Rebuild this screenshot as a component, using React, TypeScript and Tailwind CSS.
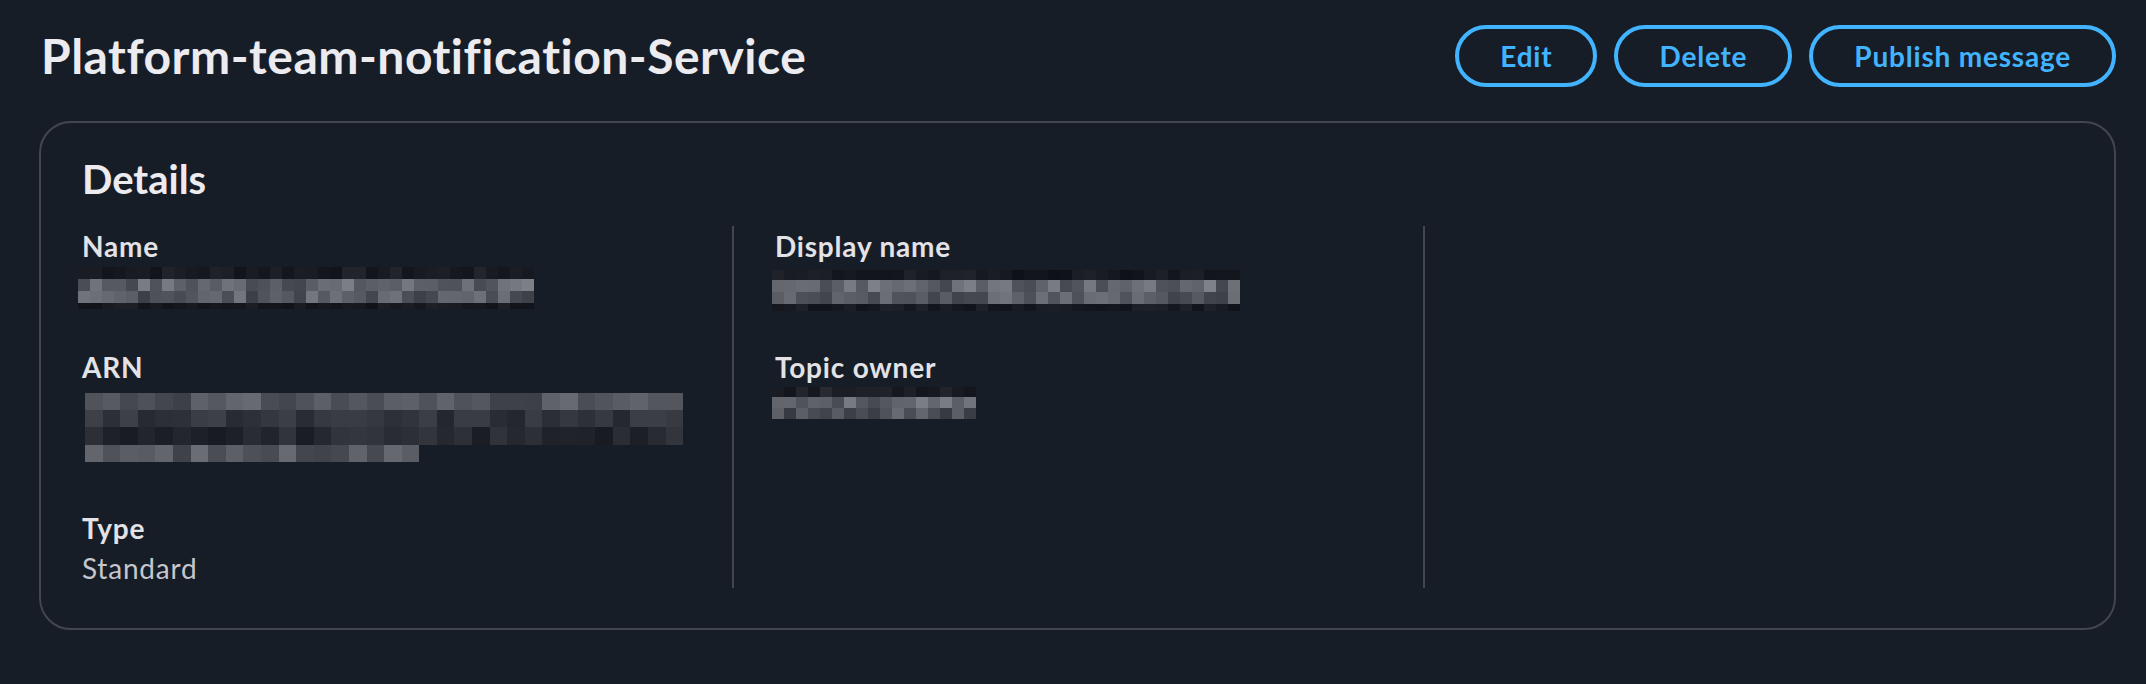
import type { ReactNode } from 'react';

// Redacted values are shown as a pixel mosaic, like the reference.
type MosaicRow = { cells: number; h: number; lo: number; hi: number };

function seeded(seed: number) {
  let s = seed;
  return () => {
    s = (s * 9301 + 49297) % 233280;
    return s / 233280;
  };
}

function Mosaic({ rows, cellW, seed }: { rows: MosaicRow[]; cellW: number; seed: number }) {
  const rand = seeded(seed);
  return (
    <div className="flex flex-col">
      {rows.map((row, r) => (
        <div key={r} className="flex">
          {Array.from({ length: row.cells }).map((_, c) => {
            const v = Math.round(row.lo + rand() * (row.hi - row.lo));
            return (
              <div
                key={c}
                style={{
                  width: cellW,
                  height: row.h,
                  backgroundColor: `rgb(${v}, ${v + 3}, ${v + 10})`,
                }}
              />
            );
          })}
        </div>
      ))}
    </div>
  );
}

const nameRows: MosaicRow[] = [
  { cells: 38, h: 12, lo: 16, hi: 34 },
  { cells: 38, h: 12, lo: 64, hi: 126 },
  { cells: 38, h: 12, lo: 60, hi: 116 },
  { cells: 38, h: 6, lo: 16, hi: 30 },
];

const displayRows: MosaicRow[] = [
  { cells: 39, h: 10, lo: 14, hi: 32 },
  { cells: 39, h: 12, lo: 64, hi: 126 },
  { cells: 39, h: 12, lo: 60, hi: 116 },
  { cells: 39, h: 7, lo: 16, hi: 30 },
];

const arnRows: MosaicRow[] = [
  { cells: 34, h: 17, lo: 60, hi: 104 },
  { cells: 34, h: 17, lo: 34, hi: 62 },
  { cells: 34, h: 18, lo: 24, hi: 52 },
  { cells: 19, h: 17, lo: 62, hi: 108 },
];

const ownerRows: MosaicRow[] = [
  { cells: 17, h: 10, lo: 18, hi: 40 },
  { cells: 17, h: 11, lo: 68, hi: 122 },
  { cells: 17, h: 11, lo: 54, hi: 104 },
];

function Field({ label, children }: { label: string; children: ReactNode }) {
  return (
    <div className="flex flex-col">
      <div className="text-[28px] leading-[40px] font-bold tracking-[0.8px] text-[#e2e2e7]">{label}</div>
      {children}
    </div>
  );
}

export default function App() {
  return (
    <div
      className="min-h-[684px] w-full bg-[#171d26] pl-[39px] pr-[30px] pt-[25px]"
      style={{ fontFamily: 'Lato, "Open Sans", sans-serif' }}
    >
      <div className="flex items-center justify-between h-[62px]">
        <h1 className="pl-[2px] text-[48px] leading-[60px] font-bold tracking-[0.5px] text-[#ebebf0]">
          Platform-team-notification-Service
        </h1>
        <div className="flex items-center gap-[17px]">
          {['Edit', 'Delete', 'Publish message'].map((b) => (
            <button
              key={b}
              className="h-[62px] px-[41px] rounded-full border-4 border-[#42b4ff] text-[#42b4ff] text-[28px] font-bold tracking-[0.8px] leading-[40px]"
            >
              {b}
            </button>
          ))}
        </div>
      </div>

      <div className="mt-[34px] rounded-[32px] border-2 border-[#424650]">
        <h2 className="pl-[41px] pt-[32px] pb-[23px] text-[40px] leading-[48px] font-bold text-[#ebebf0]">
          Details
        </h2>
        <div className="grid grid-cols-3 pb-[40px]">
          <div className="pl-[41px] flex flex-col gap-[41px]">
            <Field label="Name">
              <div className="h-[40px] pt-[1px] -ml-[4px]">
                <Mosaic rows={nameRows} cellW={12} seed={7} />
              </div>
            </Field>
            <Field label="ARN">
              <div className="h-[80px] pt-[6px] ml-[3px]">
                <Mosaic rows={arnRows} cellW={17.6} seed={31} />
              </div>
            </Field>
            <Field label="Type">
              <div className="text-[28px] leading-[40px] tracking-[0.8px] text-[#c6c6cd]">Standard</div>
            </Field>
          </div>
          <div className="border-l-2 border-[#424650] pl-[41px] flex flex-col gap-[41px]">
            <Field label="Display name">
              <div className="h-[40px] pt-[4px] -ml-[3px]">
                <Mosaic rows={displayRows} cellW={12} seed={19} />
              </div>
            </Field>
            <Field label="Topic owner">
              <div className="h-[40px] -ml-[3px]">
                <Mosaic rows={ownerRows} cellW={12} seed={53} />
              </div>
            </Field>
          </div>
          <div className="border-l-2 border-[#424650] pl-[41px]" />
        </div>
      </div>
    </div>
  );
}
